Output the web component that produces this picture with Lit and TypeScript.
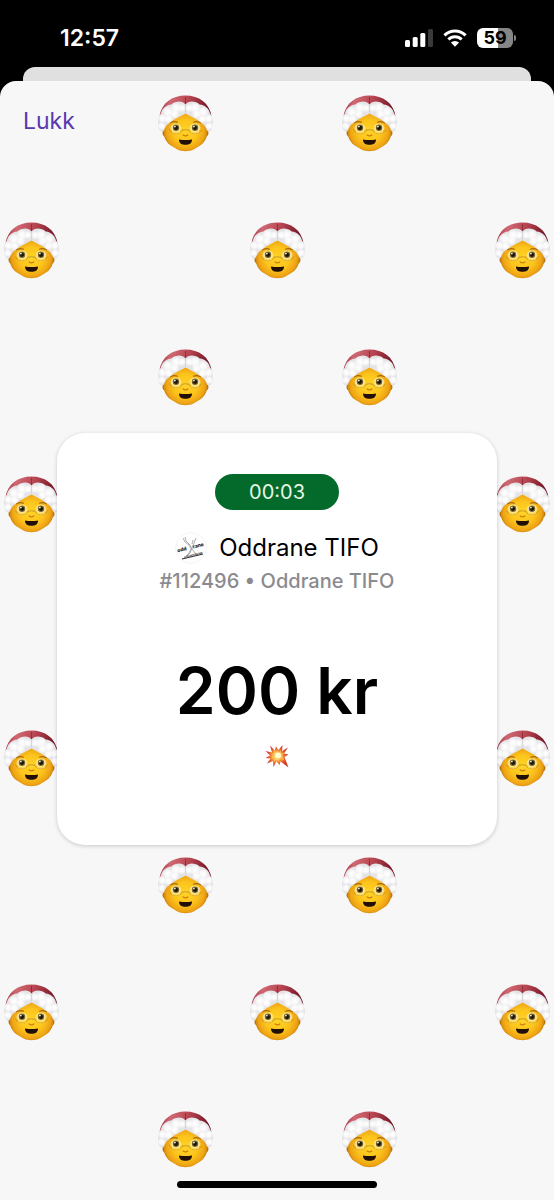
import { LitElement, html, svg, css } from "lit";
import { customElement, property } from "lit/decorators.js";

const FUR_TUFTS = [
  [4.8, 31, 4.5], [5.5, 23.5, 5], [11, 17, 6], [19, 13, 6.2], [25, 13, 4.5],
  [52.2, 31, 4.5], [51.5, 23.5, 5], [46, 17, 6], [38, 13, 6.2], [32, 13, 4.5],
  [11.5, 24, 5], [17.5, 19, 5], [39.500, 19, 5], [45.5, 24, 5],
];

@customElement("claus-face")
export class ClausFace extends LitElement {
  static styles = css`
    :host { display: block; width: 57px; height: 57px; flex: none; }
    .art { display: block; width: 100%; height: 100%; }
  `;

  private eye(x: number) {
    return svg`
      <ellipse cx=${x} cy="33" rx="5.400" ry="4.600" fill="#ffe88a" opacity=".8"/>
      <ellipse cx=${x} cy="32.800" rx="4" ry="3.400" fill="#fffbe0"/>
      <circle cx=${x} cy="32.800" r="3.300" fill="#77642e"/>
      <circle cx=${x} cy="32.800" r="2.100" fill="#1d1606"/>
      <circle cx=${x - 1.1} cy="31.600" r=".9" fill="#fff6cc"/>
      <path d="M${x - 6.5} 34.500C${x - 5} 40 ${x + 5} 40 ${x + 6.5} 34.500" fill="none" stroke="#b98a30" stroke-width=".9" opacity=".8"/>
      <path d="M${x - 4} 37.500q4 1.500 8 0" fill="none" stroke="#ffe680" stroke-width=".7"/>`;
  }

  render() {
    return html`<svg class="art" viewBox="0 0 57 57" aria-hidden="true">
      <defs>
        <radialGradient id="skin" cx=".5" cy=".52" r=".55">
          <stop offset="0" stop-color="#ffd426"/>
          <stop offset=".5" stop-color="#fcc41c"/>
          <stop offset=".8" stop-color="#eea314"/>
          <stop offset="1" stop-color="#b56e0c"/>
        </radialGradient>
        <linearGradient id="hat" x1="0" x2="1" y1="0" y2=".15">
          <stop offset="0" stop-color="#8a2030"/>
          <stop offset=".25" stop-color="#cf6872"/>
          <stop offset=".6" stop-color="#b5434f"/>
          <stop offset="1" stop-color="#721524"/>
        </linearGradient>
        <radialGradient id="fur">
          <stop offset="0" stop-color="#ffffff"/>
          <stop offset=".5" stop-color="#fcfbfc" stop-opacity=".9"/>
          <stop offset="1" stop-color="#f0eff1" stop-opacity="0"/>
        </radialGradient>
      </defs>
      <path d="M2.500 21C4.500 8 15 .4 28.500 .4S52.500 8 54.500 21C44 15 36 15 28.500 15S13 15 2.500 21Z" fill="url(#hat)"/>
      <path d="M28.500 2v8" stroke="#8a2c39" stroke-width=".9"/>
      <path d="M7 34C4 38 6 42 9 42H48C51 42 53 38 50 34L48 25H9Z" fill="#b9740f"/>
      <path d="M28.500 15C14 18 6.700 26 6.700 37C6.700 43.500 10 48.500 15.500 51.500C20 54.200 22 56.200 28.500 56.200S37 54.200 41.500 51.500C47 48.500 50.300 43.500 50.300 37C50.300 26 43 18 28.500 15Z" fill="url(#skin)"/>
      <path d="M28.500 9.500C26 5.800 19 5.500 14.500 9.500C8.500 10 4.500 14.500 4 18.500C1 22 .2 27 1.500 30.500C1.200 35.500 4.500 38 7 35.500C8 29 17 24.500 28.500 18.500C40 24.500 49 29 50 35.500C52.500 38 55.800 35.500 55.500 30.500C56.800 27 56 22 53 18.500C52.500 14.500 48.500 10 42.500 9.500C38 5.500 31 5.800 28.500 9.500Z" fill="#e4e3e6"/>
      ${FUR_TUFTS.map(([x, y, r]) => svg`<circle cx=${x} cy=${y} r=${r} fill="url(#fur)"/>`)}
      <path d="M28.500 9.500v8" stroke="#cfcdd1" stroke-width=".7"/>
      <path d="M13.500 27.900q3.500-2.200 7-.6M36.500 27.300q3.500-1.600 7 .6" fill="none" stroke="#a86a10" stroke-width="1.100" stroke-linecap="round"/>
      ${this.eye(19)}${this.eye(38)}
      <path d="M25.500 35.400q3-1.400 6 0" fill="none" stroke="#b98a30" stroke-width=".8"/>
      <path d="M26.200 40q2.300 1.800 4.600 0" fill="none" stroke="#cf7d10" stroke-width="1.300" stroke-linecap="round"/>
      <path d="M22 44.400Q28.500 45.400 35 44.400C35 48.400 32 49.800 28.500 49.800S22 48.400 22 44.400Z" fill="#221006"/>
    </svg>`;
  }
}

@customElement("status-bar")
export class StatusBar extends LitElement {
  static styles = css`
    :host {
      display: flex; justify-content: space-between; align-items: center;
      padding: 8px 38px 0 60px; height: 59px; color: #fff; font-weight: 600;
    }
    .time { font-size: 23px; line-height: 28px; }
    .icons { display: flex; align-items: center; gap: 10px; }
    .icon { display: block; }
    .battery { display: flex; align-items: center; gap: 1px; }
    .level {
      width: 36px; border-radius: 6px; text-align: center; color: #000;
      font-size: 18px; line-height: 20px; font-weight: 700;
      background: linear-gradient(90deg, #fff 59%, #858585 59%);
    }
    .tip { width: 2px; height: 6px; border-radius: 0 2px 2px 0; background: #858585; }
  `;

  render() {
    return html`
      <span class="time">12:57</span>
      <div class="icons">
        <svg class="icon" width="28" height="18" viewBox="0 0 28 18" role="img" aria-label="Signal">
          <rect x="0" y="11" width="5" height="7" rx="1.500" fill="#fff"/>
          <rect x="7.700" y="8" width="5" height="10" rx="1.500" fill="#fff"/>
          <rect x="15.300" y="4" width="5" height="14" rx="1.500" fill="#fff"/>
          <rect x="23" y="0" width="5" height="18" rx="1.500" fill="#3a3a3a"/>
        </svg>
        <svg class="icon" width="24" height="18" viewBox="0 0 24 18" role="img" aria-label="Wi-Fi">
          <g fill="none" stroke="#fff" stroke-width="3.100">
            <path d="M1.400 6.300a15.200 15.200 0 0 1 21.200 0"/>
            <path d="M5.400 10.500a9.400 9.400 0 0 1 13.200 0"/>
          </g>
          <path d="M12 17.800L7.900 13.600a5.900 5.900 0 0 1 8.200 0Z" fill="#fff"/>
        </svg>
        <div class="battery"><span class="level">59</span><span class="tip"></span></div>
      </div>`;
  }
}

@customElement("receipt-card")
export class ReceiptCard extends LitElement {
  @property() timer = "";
  @property() merchant = "";
  @property() reference = "";
  @property() amount = "";

  static styles = css`
    :host {
      display: flex; flex-direction: column; align-items: center;
      padding: 41px 24px 77px; border-radius: 28px; background: #fff;
      box-shadow: 0 1px 4px rgba(20, 20, 50, 0.2);
    }
    .timer {
      padding: 0 34px; border-radius: 18px; background: #046a2b; color: #e4f7e6;
      font-size: 20px; line-height: 36px;
    }
    .merchant { display: flex; align-items: center; gap: 12px; margin: 21px 0 0; font-size: 24px; line-height: 34px; font-weight: 400; }
    .logo { display: block; overflow: visible; }
    .logo-text { font: 800 5px "Inter", sans-serif; }
    .logo-sub { font: 800 2px "Inter", sans-serif; }
    .reference { margin: 0; color: #8b8b8f; font-size: 20px; line-height: 32px; font-weight: 500; }
    .amount { margin: 54px 0 0; font-size: 64px; line-height: 80px; font-weight: 600; }
    .burst { display: block; margin-top: 13px; }
  `;

  render() {
    return html`
      <span class="timer" role="timer">${this.timer}</span>
      <h1 class="merchant">
        <svg class="logo" width="32" height="32" viewBox="0 0 32 32" aria-hidden="true">
          <circle cx="16" cy="16" r="15.500" fill="#fefefe" stroke="#f1f1f1" stroke-width=".7"/>
          <g fill="none" stroke="#9a9a9a" stroke-width=".8">
            <path d="M8 6l2 4 4 3 2 4-2 4-3 3M10 5l1 4 4 4 2 4 3 4 3 2M21 6l-2 5-2 5-2 5-3 3M18 8l-1 4"/>
          </g>
          <g transform="rotate(-14 16 16)" fill="#161616">
            <text class="logo-text" x="2" y="17">odd</text>
            <text class="logo-text" x="18" y="17">rane</text>
            <text class="logo-sub" x="7" y="24">SUPPORTERKLUBB</text>
          </g>
          <path d="M7 27L28 22" stroke="#333" stroke-width="1.200"/>
        </svg>
        <span>${this.merchant}</span>
      </h1>
      <p class="reference">${this.reference}</p>
      <p class="amount">${this.amount}</p>
      <svg class="burst" width="24" height="24" viewBox="0 0 24 24" role="img" aria-label="Collision">
        <defs>
          <radialGradient id="blast">
            <stop offset="0" stop-color="#fffbd0"/>
            <stop offset=".25" stop-color="#ffe27a"/>
            <stop offset=".5" stop-color="#f58a3c"/>
            <stop offset=".8" stop-color="#dc4a2c"/>
            <stop offset="1" stop-color="#cf3b28"/>
          </radialGradient>
        </defs>
        <path d="M5 1.500L9.800 6.500L11 2.500L13.500 6L17.500 1L17 7L23 3.500L19 9.500L23.500 10.500L19.500 13L23.500 23.500L15.500 17.500L14.500 21L11.500 17.500L8.500 23L8 17L2 19.500L5.500 14.500L.5 14L5 11.500L.5 7L7 8.500Z" fill="url(#blast)"/>
        <path d="M8.500 5L11 8L12.500 6L14 8.500L16 6L16.200 9.500L19 8.500L17.200 11.500L19.500 16.500L15 14.800L13.500 17L11.500 14.800L9 17.500L9 14L6 14L8.500 12L6 9.500L9.500 10Z" fill="#ffc34f" opacity=".75"/>
        <circle cx="13" cy="11.500" r="3" fill="#fffbd2"/>
      </svg>`;
  }
}

@customElement("app-root")
export class AppRoot extends LitElement {
  static styles = css`
    :host {
      display: flex; flex-direction: column; min-height: 100vh; background: #000;
      font-family: "Inter", "Noto Sans", sans-serif; color: #000;
    }
    .behind { height: 14px; margin: 0 23px; border-radius: 12px 12px 0 0; background: #e0e0e0; }
    .sheet {
      flex: 1; display: grid; grid-template-columns: minmax(0, 1fr); overflow: hidden;
      border-radius: 16px 16px 0 0; background: #f7f7f7;
    }
    .sheet > * { grid-area: 1 / 1; }
    .pattern { display: flex; flex-direction: column; gap: 70px; padding: 14px 3px 0; }
    .row { display: flex; justify-content: space-between; }
    .row.inner { justify-content: center; gap: 127px; }
    .close {
      justify-self: start; align-self: start; margin: 24px 23px; padding: 0; border: 0;
      background: none; color: #5a38b0; font: inherit; font-size: 23px; line-height: 32px; cursor: pointer;
    }
    .card { align-self: center; margin: 0 57px 4px; }
    .home { align-self: end; justify-self: center; width: 36%; height: 7px; margin-bottom: 12px; border-radius: 4px; background: #000; }
  `;

  render() {
    return html`
      <status-bar></status-bar>
      <div class="behind"></div>
      <main class="sheet">
        <div class="pattern">
          ${Array.from({ length: 9 }, (_, i) => {
            const inner = i % 2 === 0;
            return html`<div class="row ${inner ? "inner" : ""}">
              ${Array.from({ length: inner ? 2 : 3 }, () => html`<claus-face></claus-face>`)}
            </div>`;
          })}
        </div>
        <button class="close" type="button">Lukk</button>
        <receipt-card
          class="card"
          timer="00:03"
          merchant="Oddrane TIFO"
          reference="#112496 • Oddrane TIFO"
          amount="200 kr"
        ></receipt-card>
        <div class="home"></div>
      </main>`;
  }
}
